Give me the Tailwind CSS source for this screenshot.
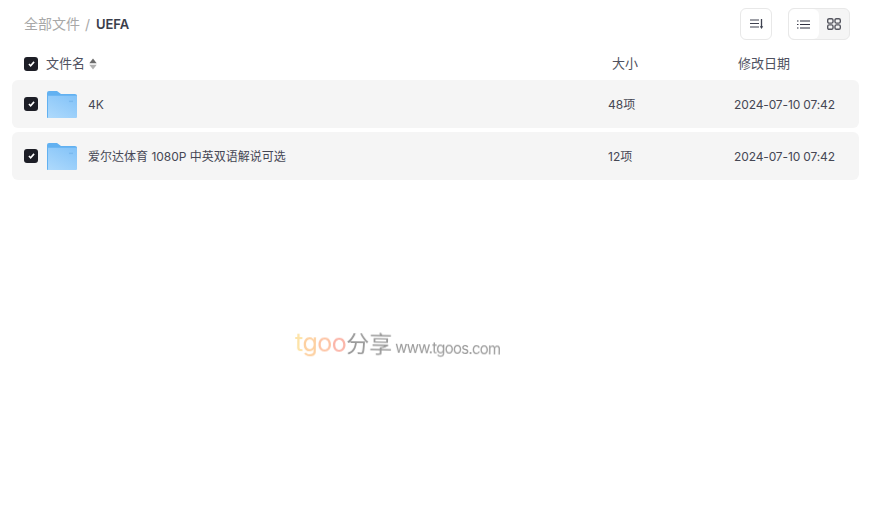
<!DOCTYPE html>
<html lang="zh">
<head>
<meta charset="utf-8">
<script src="https://cdn.jsdelivr.net/npm/@tailwindcss/browser@4"></script>
</head>
<body class="bg-white">
<div class="relative w-[874px] h-[514px] overflow-hidden font-['Inter','Noto_Sans_CJK_SC',sans-serif] text-[#454754]">
  <header class="h-12 pl-6 pr-6 flex items-center justify-between">
    <div class="flex items-center text-sm pt-px">
      <span class="text-[#a8a8a8] -translate-y-px">全部文件</span>
      <span class="ml-[5px] mr-[6px] text-[#a8a8a8]">/</span>
      <span class="font-semibold text-[13px] tracking-[-0.1px] text-[#3a3d4a]">UEFA</span>
    </div>
    <div class="flex items-center gap-4">
      <button class="w-8 h-8 rounded-md border border-[#e8e8e8] flex items-center justify-center pl-px">
        <svg width="14" height="10" viewBox="0 0 14 10" fill="none" stroke="#3f4250" stroke-width="1.1"><path d="M0 1h9M0 4.5h9M0 8h9"/><path d="M11.5 0v8" stroke-width="1.3"/><path d="M9.8 7.2h3.4L11.5 10z" fill="#3f4250" stroke="none"/></svg>
      </button>
      <div class="w-[62px] h-8 rounded-md border border-[#e8e8e8] flex overflow-hidden bg-[#f5f5f5]">
        <div class="w-[30px] bg-white rounded-md flex items-center justify-center pr-[2px]">
          <svg width="13" height="9" viewBox="0 0 13 9" fill="none" stroke="#2f3140" stroke-width="1.2"><path d="M3 1h10M3 4.5h10M3 8h10"/><path d="M0 1h1.5M0 4.5h1.5M0 8h1.5"/></svg>
        </div>
        <div class="flex-1 flex items-center justify-center">
          <svg width="14" height="12" viewBox="0 0 14 12" fill="none" stroke="#55565f" stroke-width="1.4"><rect x="0.7" y="0.7" width="5.3" height="4.4" rx="1.4"/><rect x="8" y="0.7" width="5.3" height="4.4" rx="1.4"/><rect x="0.7" y="6.9" width="5.3" height="4.4" rx="1.4"/><rect x="8" y="6.9" width="5.3" height="4.4" rx="1.4"/></svg>
        </div>
      </div>
    </div>
  </header>

  <div class="h-8 flex items-center pl-6 text-[13px] text-[#4f5160]">
    <span class="w-[14px] h-[14px] rounded-[3px] bg-[#1d1e26] flex items-center justify-center">
      <svg width="7" height="6" viewBox="0 0 8 7" fill="none" stroke="#fff" stroke-width="1.9"><path d="M1 3.5l2 2L7 1"/></svg>
    </span>
    <span class="ml-2">文件名</span>
    <svg class="ml-[4px]" width="8" height="12" viewBox="0 0 8 12"><path d="M4 .5l3.7 4.8H.3z" fill="#6a6a6a"/><path d="M4 11.5l3.7-4.8H.3z" fill="#b0b0b0"/></svg>
    <span class="ml-[515px] w-[126px]">大小</span>
    <span>修改日期</span>
  </div>

  <div class="px-3 flex flex-col gap-1">
    <div class="h-12 w-[847px] rounded-md bg-[#f5f5f5] flex items-center pl-3 text-xs">
      <span class="w-[14px] h-[14px] rounded-[3px] bg-[#1d1e26] flex items-center justify-center">
        <svg width="7" height="6" viewBox="0 0 8 7" fill="none" stroke="#fff" stroke-width="1.9"><path d="M1 3.5l2 2L7 1"/></svg>
      </span>
      <svg class="ml-[9px] mt-[1px]" width="30" height="27" viewBox="0 0 30 28" preserveAspectRatio="none"><defs><linearGradient id="f1" x1="0.8" y1="0" x2="0.1" y2="1"><stop offset="0" stop-color="#86c4f8"/><stop offset="1" stop-color="#add9fc"/></linearGradient></defs><path d="M0 2a2 2 0 0 1 2-2h8l4 3h14a2 2 0 0 1 2 2v4H0z" fill="#62b1f1"/><rect y="5" width="30" height="23" rx="1" fill="url(#f1)"/><path d="M0 5v22a1 1 0 0 0 1 1V5z" fill="#62b1f1"/><rect x="22" y="10" width="4" height="1.5" fill="#7ab9ef"/></svg>
      <span class="ml-[11px] w-[520px] pt-px">4K</span>
      <span class="w-[126px] pt-px">48项</span>
      <span class="tracking-[-0.13px] pt-px">2024-07-10 07:42</span>
    </div>
    <div class="h-12 w-[847px] rounded-md bg-[#f5f5f5] flex items-center pl-3 text-xs">
      <span class="w-[14px] h-[14px] rounded-[3px] bg-[#1d1e26] flex items-center justify-center">
        <svg width="7" height="6" viewBox="0 0 8 7" fill="none" stroke="#fff" stroke-width="1.9"><path d="M1 3.5l2 2L7 1"/></svg>
      </span>
      <svg class="ml-[9px] mt-[1px]" width="30" height="27" viewBox="0 0 30 28" preserveAspectRatio="none"><defs><linearGradient id="f2" x1="0.8" y1="0" x2="0.1" y2="1"><stop offset="0" stop-color="#86c4f8"/><stop offset="1" stop-color="#add9fc"/></linearGradient></defs><path d="M0 2a2 2 0 0 1 2-2h8l4 3h14a2 2 0 0 1 2 2v4H0z" fill="#62b1f1"/><rect y="5" width="30" height="23" rx="1" fill="url(#f2)"/><path d="M0 5v22a1 1 0 0 0 1 1V5z" fill="#62b1f1"/><rect x="22" y="10" width="4" height="1.5" fill="#7ab9ef"/></svg>
      <span class="ml-[11px] w-[520px] pt-px">爱尔达体育 1080P 中英双语解说可选</span>
      <span class="w-[126px] pt-px">12项</span>
      <span class="tracking-[-0.13px] pt-px">2024-07-10 07:42</span>
    </div>
  </div>

  <div class="absolute left-[295px] top-[324px] flex items-baseline blur-[0.45px] whitespace-nowrap origin-left rotate-[1deg]">
    <span class="text-[25px] tracking-[-0.5px]"><span class="text-[#fde3a7]">t</span><span class="text-[#fdd0a0]">g</span><span class="text-[#fdc4a4]">o</span><span class="text-[#fbb5a8]">o</span></span>
    <span class="text-[23px] text-[#9a9a9a]">分享</span>
    <span class="ml-[3px] text-[15px] tracking-[-0.75px] text-[#9a9a9a]">www.tgoos.com</span>
  </div>
</div>
</body>
</html>
